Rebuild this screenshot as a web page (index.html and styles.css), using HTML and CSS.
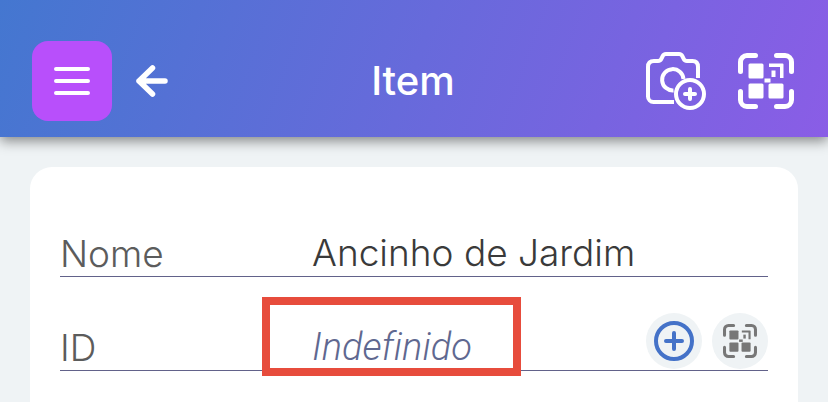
FILE: index.html
```html
<!DOCTYPE html>
<html lang="pt">
<head>
  <meta charset="UTF-8">
  <meta name="viewport" content="width=device-width, initial-scale=1.0">
  <title>Item</title>
  <link rel="stylesheet" href="styles.css">
</head>
<body>
  <svg class="sprite" aria-hidden="true">
    <symbol id="qr" viewBox="0 0 56 56">
      <g fill="none" stroke="currentColor" stroke-width="5" stroke-linecap="round">
        <path d="M17.500 2.500H9a6.500 6.500 0 0 0-6.500 6.500v9.500"/>
        <path d="M38.500 2.500H47a6.500 6.500 0 0 1 6.500 6.500v9.500"/>
        <path d="M2.500 38.500V47a6.500 6.500 0 0 0 6.500 6.500h8.500"/>
        <path d="M53.500 38.500V47a6.500 6.500 0 0 1-6.500 6.500h-8.500"/>
      </g>
      <g fill="currentColor">
        <rect x="10.500" y="10.500" width="15" height="15" rx="1.500"/>
        <rect x="10.500" y="30.500" width="15" height="15" rx="1.500"/>
        <rect x="30.500" y="30.500" width="15" height="15" rx="1.500"/>
        <path d="M31 10.500h13.500q1 0 1 1V25H42V14H31z"/>
        <rect x="33.500" y="17.500" width="4" height="6.500"/>
        <rect x="26.500" y="25.500" width="6" height="4"/>
      </g>
    </symbol>
  </svg>

  <header class="topbar">
    <div class="topbar-side">
      <button class="menu-btn" type="button" aria-label="Menu">
        <svg width="36" height="28" viewBox="0 0 36 28" fill="none" stroke="currentColor" stroke-width="4" stroke-linecap="round">
          <path d="M2 2h32M2 14h32M2 26h32"/>
        </svg>
      </button>
      <button class="icon-btn" type="button" aria-label="Voltar">
        <svg width="32" height="32" viewBox="0 0 32 32" fill="none" stroke="currentColor" stroke-width="5.500" stroke-linecap="round" stroke-linejoin="round">
          <path d="M16.500 3L3 16l13.500 13M3 16h26"/>
        </svg>
      </button>
    </div>
    <h1>Item</h1>
    <div class="topbar-side topbar-actions">
      <button class="icon-btn" type="button" aria-label="Adicionar foto">
        <svg width="60" height="58" viewBox="0 0 60 58" fill="none" stroke="currentColor" stroke-width="4" stroke-linecap="round" stroke-linejoin="round">
          <path stroke-linecap="butt" d="M28 50H7.500A5.500 5.500 0 0 1 2 44.500V15Q2 9 8 9h4q2.500 0 3.500-2.500l1-2Q17.500 2 20 2h13q2.500 0 3.500 2.500l1 2Q38.500 9 41 9h5.500Q52 9 52 15v11"/>
          <path stroke-linecap="butt" d="M27.500 38.500A10.700 10.700 0 1 1 37.500 27"/>
          <circle cx="44" cy="42" r="14"/>
          <path d="M44 37v10M39 42h10"/>
        </svg>
      </button>
      <button class="icon-btn" type="button" aria-label="Ler código QR">
        <svg width="56" height="56"><use href="#qr"/></svg>
      </button>
    </div>
  </header>

  <main>
    <form class="card">
      <div class="row">
        <label for="nome">Nome</label>
        <div class="field">
          <input id="nome" type="text" value="Ancinho de Jardim">
        </div>
      </div>
      <div class="row">
        <label for="codigo">ID</label>
        <div class="field">
          <input id="codigo" type="text" placeholder="Indefinido">
          <span class="highlight"></span>
        </div>
        <div class="row-actions">
          <button class="round-btn add" type="button" aria-label="Adicionar ID">
            <svg width="40" height="40" viewBox="0 0 40 40" fill="none" stroke="currentColor" stroke-width="4" stroke-linecap="round">
              <circle cx="20" cy="20" r="18"/>
              <path d="M20 12v16M12 20h16"/>
            </svg>
          </button>
          <button class="round-btn" type="button" aria-label="Ler ID por QR">
            <svg width="34" height="34"><use href="#qr"/></svg>
          </button>
        </div>
      </div>
    </form>
  </main>
</body>
</html>
```

FILE: styles.css
```css
* {
  box-sizing: border-box;
}
body {
  display: flex;
  flex-direction: column;
  min-height: 100vh;
  margin: 0;
  font-family: Inter, "Liberation Sans", sans-serif;
  background-color: #eff3f5;
  color: #3a3a3a;
}
button {
  display: flex;
  align-items: center;
  justify-content: center;
  padding: 0;
  border: none;
  background: none;
  color: inherit;
  cursor: pointer;
}
.sprite {
  display: none;
}
.topbar {
  display: grid;
  grid-template-columns: 1fr auto 1fr;
  align-items: center;
  padding: 41px 34px 16px 32px;
  background: linear-gradient(110deg, #4477d0, #8a5de6);
  box-shadow: 0 4px 12px rgba(0, 0, 0, 0.45);
  color: white;
}
.topbar h1 {
  margin: 0;
  font-size: 40px;
  font-weight: 500;
  line-height: 48px;
}
.topbar-side {
  display: flex;
  align-items: center;
  gap: 24px;
}
.topbar-actions {
  justify-content: flex-end;
  gap: 32px;
}
.menu-btn {
  width: 80px;
  height: 80px;
  border-radius: 16px;
  background-color: #b84ffb;
}
main {
  display: flex;
  flex: 1;
  padding: 30px 30px 0;
}
.card {
  flex: 1;
  padding: 16px 30px;
  border-radius: 22px 22px 0 0;
  background-color: white;
}
.row {
  display: flex;
  align-items: flex-end;
  height: 94px;
  border-bottom: 1px solid #62628a;
}
.row label {
  flex: 0 0 252px;
  font-size: 37px;
  font-weight: 300;
  line-height: 44px;
  color: #5c5c5c;
}
.field {
  position: relative;
  flex: 1;
  min-width: 0;
}
.field input {
  display: block;
  width: 100%;
  height: 48px;
  padding: 0;
  border: none;
  outline: none;
  background: none;
  font-family: inherit;
  font-size: 37px;
  font-weight: 350;
  color: #3a3a3a;
}
.field input::placeholder {
  font-family: Roboto, sans-serif;
  font-size: 38px;
  font-weight: 300;
  font-style: italic;
  font-variant-ligatures: none;
  color: #5f6890;
  opacity: 1;
}
/* red frame around the empty ID */
.highlight {
  position: absolute;
  left: -50px;
  bottom: -6px;
  width: 259px;
  height: 79px;
  border: 8px solid #e74c3c;
  pointer-events: none;
}
.row-actions {
  display: flex;
  gap: 10px;
  padding-bottom: 1px;
}
.round-btn {
  width: 56px;
  height: 56px;
  border-radius: 50%;
  background-color: #eff3f5;
  color: #777;
}
.round-btn.add {
  color: #4472c8;
}
```
